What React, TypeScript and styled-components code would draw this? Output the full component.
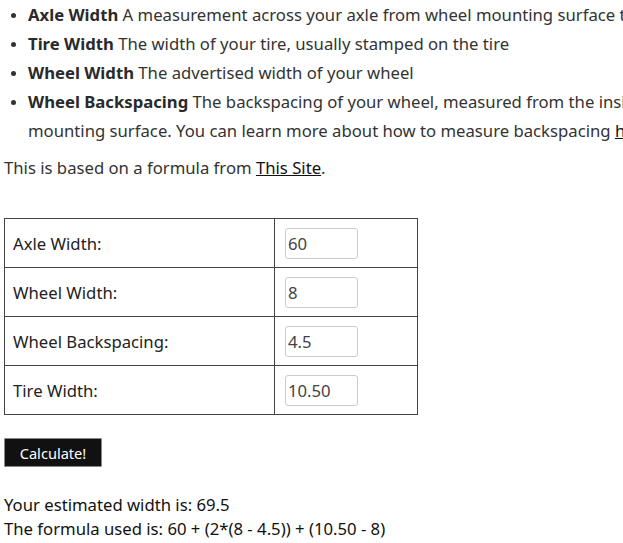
import React, { useState } from 'react';
import styled, { createGlobalStyle } from 'styled-components';

const GlobalStyle = createGlobalStyle`
  html, body {
    margin: 0;
    padding: 0;
    overflow: hidden;
    background: #fff;
  }
  body {
    font-family: "Noto Sans", "Open Sans", sans-serif;
    font-size: 16.7px;
    color: #333;
  }
`;

const Page = styled.div`
  width: 870px;
  padding: 0 0 0 4px;
`;

const Intro = styled.ul`
  margin: 0;
  padding-left: 24px;
  line-height: 29px;
`;

const Item = styled.li`
  &::marker {
    font-size: 14px;
  }
  b {
    color: #2a2a2a;
  }
`;

const Link = styled.a`
  color: #111;
  text-decoration: underline;
`;

const Note = styled.p`
  margin: 10px 0 37px;
  line-height: 26px;
`;

const Table = styled.table`
  border-collapse: collapse;
  width: 414px;
  color: #222;
`;

const Cell = styled.td<{ $wide?: boolean }>`
  border: 1px solid #444;
  height: 48px;
  padding: 0 8px 0 ${(p) => (p.$wide ? '8px' : '10px')};
  width: ${(p) => (p.$wide ? '253px' : 'auto')};
`;

const Field = styled.input`
  display: block;
  width: 73px;
  height: 31px;
  box-sizing: border-box;
  border: 1px solid #ccc;
  border-radius: 3px;
  padding: 0 2px;
  font-family: inherit;
  font-size: 16.7px;
  color: #444;
`;

const Button = styled.button`
  display: block;
  margin-top: 23px;
  width: 98px;
  height: 29px;
  background: #111;
  color: #fff;
  border: 1px solid #888;
  border-radius: 1px;
  font-family: inherit;
  font-size: 14.6px;
  cursor: pointer;
`;

const Result = styled.div`
  margin-top: 26px;
  line-height: 24px;
  color: #111;
`;

const rows = [
  { label: 'Axle Width:', value: '60' },
  { label: 'Wheel Width:', value: '8' },
  { label: 'Wheel Backspacing:', value: '4.5' },
  { label: 'Tire Width:', value: '10.50' },
];

export default function App() {
  const [values, setValues] = useState(rows.map((r) => r.value));

  return (
    <Page>
      <GlobalStyle />
      <Intro>
        <Item>
          <b>Axle Width</b> A measurement across your axle from wheel mounting surface to wheel mounting surface
        </Item>
        <Item>
          <b>Tire Width</b> The width of your tire, usually stamped on the tire
        </Item>
        <Item>
          <b>Wheel Width</b> The advertised width of your wheel
        </Item>
        <Item>
          <b>Wheel Backspacing</b> The backspacing of your wheel, measured from the inside of the wheel to the wheel
          mounting surface. You can learn more about how to measure backspacing <Link href="#">here</Link>.
        </Item>
      </Intro>
      <Note>
        This is based on a formula from <Link href="#">This Site</Link>.
      </Note>
      <Table>
        <tbody>
          {rows.map((r, i) => (
            <tr key={r.label}>
              <Cell $wide>{r.label}</Cell>
              <Cell>
                <Field
                  value={values[i]}
                  onChange={(e) => {
                    const next = [...values];
                    next[i] = e.target.value;
                    setValues(next);
                  }}
                />
              </Cell>
            </tr>
          ))}
        </tbody>
      </Table>
      <Button>Calculate!</Button>
      <Result>
        Your estimated width is: 69.5
        <br />
        The formula used is: 60 + (2*(8 - 4.5)) + (10.50 - 8)
      </Result>
    </Page>
  );
}
